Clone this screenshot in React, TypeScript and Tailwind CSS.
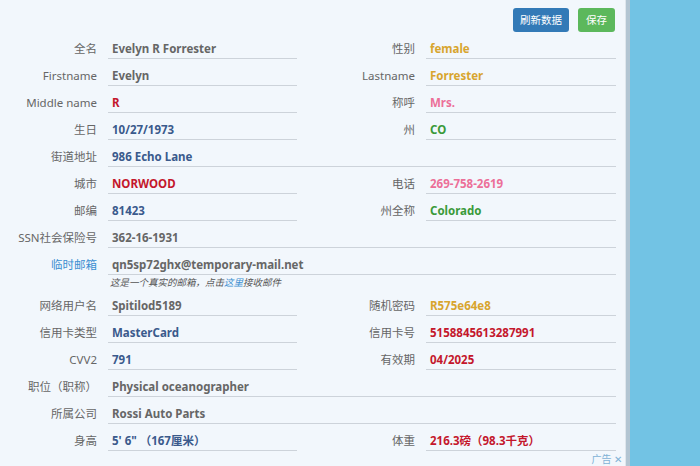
import React from "react";

const C = {
  gray: "text-[#666666]",
  red: "text-[#c4172c]",
  gold: "text-[#d8a52e]",
  pink: "text-[#ec6f98]",
  green: "text-[#3a9a3a]",
  blue: "text-[#3a5a8c]",
};

function Label({ children, className = "" }: { children: React.ReactNode; className?: string }) {
  return (
    <div className={`w-[97px] shrink-0 h-[27px] flex items-end justify-end pb-[2px] leading-[16px] text-[11.5px] whitespace-nowrap ${className || "text-[#666]"}`}>
      {children}
    </div>
  );
}

function Value({ children, color, w }: { children: React.ReactNode; color: string; w: string }) {
  return (
    <div className={`${w} ml-[11px] shrink-0 h-[27px] flex items-end pb-[1px] pl-[4px] border-b border-[#cdd3da] leading-[16px] text-[11.5px] font-bold whitespace-nowrap ${color}`}>
      {children}
    </div>
  );
}

function Half({ label, value, color }: { label: string; value: React.ReactNode; color: string }) {
  return (
    <div className="w-[318px] flex shrink-0">
      <Label>{label}</Label>
      <Value color={color} w="w-[189px]">{value}</Value>
    </div>
  );
}

function Row2({ l, r }: { l: [string, React.ReactNode, string]; r?: [string, React.ReactNode, string] }) {
  return (
    <div className="flex">
      <Half label={l[0]} value={l[1]} color={l[2]} />
      {r && (
        <div className="flex">
          <Label>{r[0]}</Label>
          <Value color={r[2]} w="w-[190px]">{r[1]}</Value>
        </div>
      )}
    </div>
  );
}

function Full({ label, value, color, labelClass }: { label: string; value: React.ReactNode; color: string; labelClass?: string }) {
  return (
    <div className="flex">
      <Label className={labelClass}>{label}</Label>
      <Value color={color} w="w-[508px]">{value}</Value>
    </div>
  );
}

export default function App() {
  return (
    <div
      className="w-[700px] h-[466px] flex overflow-hidden bg-[#72c3e4]"
      style={{ fontFamily: '"Noto Sans", "Noto Sans CJK SC", sans-serif' }}
    >
      <div className="relative w-[626px] h-full bg-[#f2f7fc] border-r border-[#dfe6ec] shrink-0">
        <div className="flex justify-end w-[615px] pt-[8px] gap-[9px]">
          <button className="h-[24px] w-[56px] rounded-[3px] bg-[#337ab7] text-white text-[10.5px] leading-none">刷新数据</button>
          <button className="h-[24px] w-[37px] rounded-[3px] bg-[#5cb85c] text-white text-[10.5px] leading-none">保存</button>
        </div>
        <Row2 l={["全名", "Evelyn R Forrester", C.gray]} r={["性别", "female", C.gold]} />
        <Row2 l={["Firstname", "Evelyn", C.gray]} r={["Lastname", "Forrester", C.gold]} />
        <Row2 l={["Middle name", "R", C.red]} r={["称呼", "Mrs.", C.pink]} />
        <Row2 l={["生日", "10/27/1973", C.blue]} r={["州", "CO", C.green]} />
        <Full label="街道地址" value="986 Echo Lane" color={C.blue} />
        <Row2 l={["城市", "NORWOOD", C.red]} r={["电话", "269-758-2619", C.pink]} />
        <Row2 l={["邮编", "81423", C.blue]} r={["州全称", "Colorado", C.green]} />
        <Full label="SSN社会保险号" value="362-16-1931" color={C.gray} />
        <Full label="临时邮箱" value="qn5sp72ghx@temporary-mail.net" color={C.gray} labelClass="text-[#3b8fd1]" />
        <div className="flex h-[14px]">
          <div className="ml-[110px] mt-[1px] text-[9.5px] leading-[14px] italic text-[#555]">
            这是一个真实的邮箱，点击<span className="text-[#3b8fd1]">这里</span>接收邮件
          </div>
        </div>
        <Row2 l={["网络用户名", "Spitilod5189", C.gray]} r={["随机密码", "R575e64e8", C.gold]} />
        <Row2 l={["信用卡类型", "MasterCard", C.blue]} r={["信用卡号", "5158845613287991", C.red]} />
        <Row2 l={["CVV2", "791", C.blue]} r={["有效期", "04/2025", C.red]} />
        <Full label="职位（职称）" value="Physical oceanographer" color={C.gray} />
        <Full label="所属公司" value="Rossi Auto Parts" color={C.gray} />
        <Row2 l={["身高", "5' 6\" （167厘米）", C.blue]} r={["体重", "216.3磅（98.3千克）", C.red]} />
        <div className="absolute right-[3px] top-[454px] text-[10px] leading-[11px] text-[#7fb2d6]">广告 ✕</div>
      </div>
      <div className="w-[4px] h-full bg-[#b3c5d2] shrink-0" />
      <div className="flex-1" />
    </div>
  );
}
